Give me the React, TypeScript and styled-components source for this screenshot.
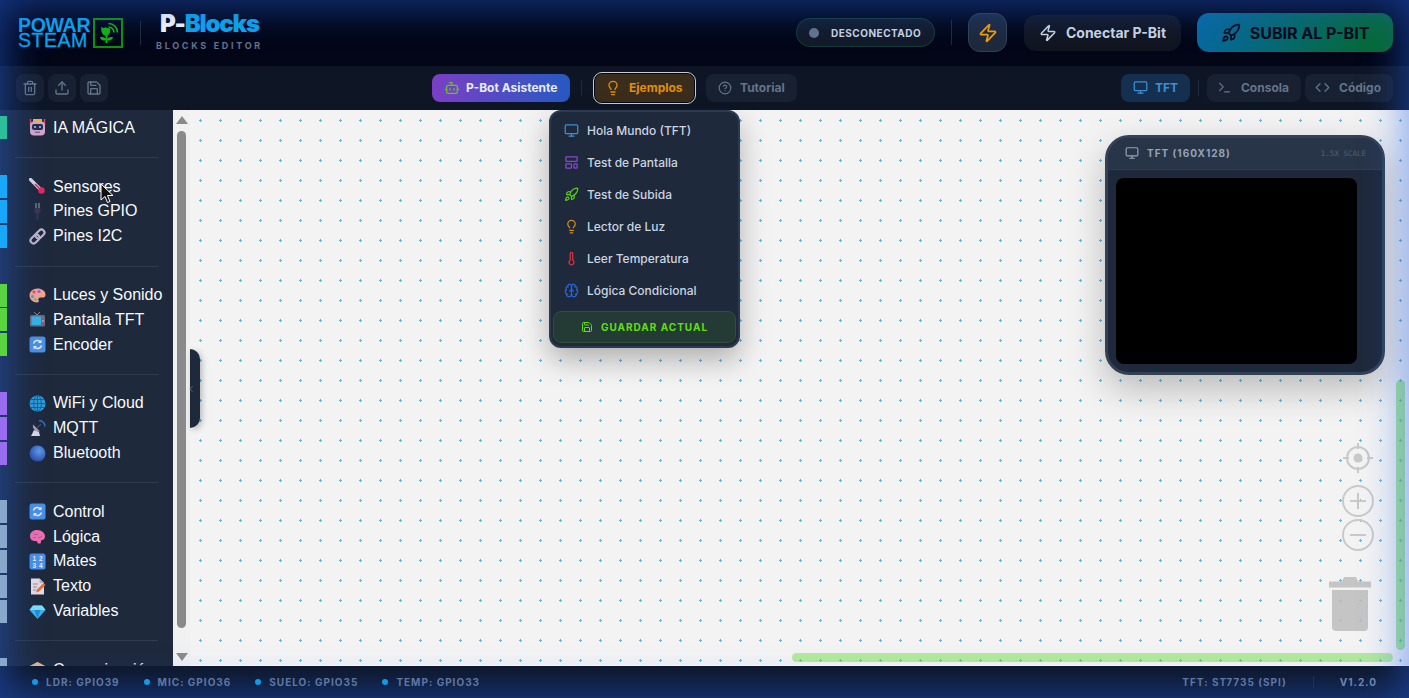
import React from 'react';
import styled, { createGlobalStyle } from 'styled-components';
import {
  Bot,
  Brain,
  ChevronLeft,
  CircleHelp,
  Code,
  Lightbulb,
  LayoutTemplate,
  Monitor,
  Rocket,
  Save,
  Terminal,
  Thermometer,
  Trash2,
  Upload,
  Zap,
} from 'lucide-react';

const GlobalStyle = createGlobalStyle`
  html, body, #root { margin: 0; height: 100%; }
  body { background: #020617; font-family: Inter, "Noto Sans", sans-serif; overflow: hidden; }
  * { box-sizing: border-box; }
`;

// --- toolbox emoji, drawn because the installed fonts have no such glyphs ---
const Emoji = ({ children }: { children: React.ReactNode }) => (
  <svg width="17" height="17" viewBox="0 0 17 17">{children}</svg>
);

const RobotIcon = () => (
  <Emoji>
    <path d="M1.500 0v6M15.500 0v6" stroke="#e0455f" strokeWidth="1.400" />
    <rect x="4" y="0" width="9" height="3" fill="#f0b23e" />
    <rect x="1" y="2.500" width="15" height="14" rx="4" fill="#d2a7c9" />
    <rect x="3" y="5" width="11" height="6" rx="2" fill="#2b2748" />
    <circle cx="6" cy="8" r="1.100" fill="#6fd3f5" />
    <circle cx="11" cy="8" r="1.100" fill="#6fd3f5" />
    <rect x="6" y="12.500" width="5" height="1.500" fill="#7f6a8c" />
  </Emoji>
);
const ThermoIcon = () => (
  <Emoji>
    <path d="M1.500 1.500 12 12" stroke="#d8d5e4" strokeWidth="3.200" strokeLinecap="round" />
    <path d="M6 6 12 12" stroke="#e8265e" strokeWidth="1.600" />
    <circle cx="12.500" cy="12.500" r="3.200" fill="#e8265e" />
  </Emoji>
);
const PlugIcon = () => (
  <Emoji>
    <path d="M7 0v5M10 0v5" stroke="#8d8a99" strokeWidth="1.200" />
    <rect x="5.500" y="5" width="6" height="5" rx="1" fill="#3b3550" />
    <rect x="7.500" y="10" width="2" height="7" fill="#3b3550" />
  </Emoji>
);
const LinkIcon = () => (
  <Emoji>
    <g fill="none" stroke="#bdb6cb" strokeWidth="2.200">
      <rect x="8" y="1" width="6" height="10" rx="3" transform="rotate(45 11 6)" />
      <rect x="3" y="6" width="6" height="10" rx="3" transform="rotate(45 6 11)" />
    </g>
  </Emoji>
);
const PaletteIcon = () => (
  <Emoji>
    <path d="M8.500 1.500C4 1.500.5 4.500.5 8.500s3.500 7 7.500 7c2 0 2-1.500 1.500-2.500s0-2.500 2-2.500h2.500c2 0 2.500-1.500 2.500-3 0-3.500-4-6-8-6z" fill="#f2a58e" />
    <circle cx="5" cy="5" r="1.500" fill="#e0457b" />
    <circle cx="10" cy="4.500" r="1.500" fill="#a45cd6" />
    <circle cx="3.500" cy="9.500" r="1.500" fill="#38a3e8" />
    <circle cx="6.500" cy="12.500" r="1.300" fill="#5cc46a" />
  </Emoji>
);
const TvIcon = () => (
  <Emoji>
    <path d="M5 1l3 3 3-3" stroke="#8b8698" fill="none" />
    <rect x="1" y="4" width="15" height="11.500" rx="1.500" fill="#6f6a7c" />
    <rect x="2.500" y="5.500" width="9.500" height="8.500" rx="1" fill="#35b4e6" />
    <circle cx="14" cy="7" r=".8" fill="#e0457b" />
    <circle cx="14" cy="10" r=".8" fill="#d8d5e4" />
  </Emoji>
);
const RefreshIcon = () => (
  <Emoji>
    <rect x=".5" y=".5" width="16" height="16" rx="2.500" fill="#4a90e6" />
    <path d="M4.500 7.500a4 4 0 0 1 7-1.500M12.500 9.500a4 4 0 0 1-7 1.500" fill="none" stroke="#e8eef8" strokeWidth="1.500" />
    <path d="M12.500 3.500v3.500H9zM4.500 13.500V10H8z" fill="#e8eef8" />
  </Emoji>
);
const GlobeIcon = () => (
  <Emoji>
    <circle cx="8.500" cy="8.500" r="8" fill="#2f9bd6" />
    <g fill="none" stroke="#0f5f92" strokeWidth=".9">
      <ellipse cx="8.500" cy="8.500" rx="3.800" ry="8" />
      <path d="M8.500.5v16M.5 8.500h16M1.800 4.500h13.400M1.800 12.500h13.400" />
    </g>
  </Emoji>
);
const SatelliteIcon = () => (
  <Emoji>
    <path d="M2 16l3-6 5 2 1 4z" fill="#dcd8e6" />
    <path d="M4 4.500a6 6 0 0 0 7 7z" fill="#aaa6b8" />
    <path d="M8 8l4-4" stroke="#4a4660" strokeWidth="1.200" />
    <path d="M10 .5a6 6 0 0 1 6 6" fill="none" stroke="#2f6fd0" strokeWidth="1.500" />
  </Emoji>
);
const BallIcon = () => (
  <Emoji>
    <defs>
      <radialGradient id="ball" cx="0.6" cy="0.35" r="0.75">
        <stop offset="0" stopColor="#5f9df0" />
        <stop offset="1" stopColor="#27439a" />
      </radialGradient>
    </defs>
    <circle cx="8.500" cy="8.500" r="8" fill="url(#ball)" />
  </Emoji>
);
const BrainIcon = () => (
  <Emoji>
    <path d="M1 8c0-3.500 3-6 7-6 5 0 8 3 8 6.500 0 2.500-2 4-3.500 3.500l-1 3.500H9L7.500 13C3.500 13.500 1 11.500 1 8z" fill="#ee6fb2" />
    <path d="M5 5.500c1 1.500 3 1.500 4 .5M9 9.500c1.500.5 3 0 3.500-1.500M4 9.500c1 .5 2 .5 3 0" stroke="#c9468f" fill="none" strokeWidth=".9" />
  </Emoji>
);
const NumbersIcon = () => (
  <Emoji>
    <rect x=".5" y=".5" width="16" height="16" rx="2.500" fill="#4a90e6" />
    <g fill="#e8eef8" fontSize="6.500" fontFamily="Liberation Sans, sans-serif" fontWeight="700" textAnchor="middle">
      <text x="5.200" y="7.500">1</text>
      <text x="11.800" y="7.500">2</text>
      <text x="5.200" y="14.500">3</text>
      <text x="11.800" y="14.500">4</text>
    </g>
  </Emoji>
);
const MemoIcon = () => (
  <Emoji>
    <path d="M2 .5h8.500L15 5v11.500H2z" fill="#e5dfe0" />
    <path d="M10.500.5V5H15z" fill="#b5aeb8" />
    <path d="M4 6h5M4 9h4M4 12h3" stroke="#8f8a96" />
    <path d="M7 14.500l1-3 6.500-6.500 2 2-6.500 6.500z" fill="#ee6a35" />
  </Emoji>
);
const GemIcon = () => (
  <Emoji>
    <path d="M4 2.500h9L16.500 7l-8 9-8-9z" fill="#3fb4ee" />
    <path d="M4 2.500h9L16.500 7H.5z" fill="#7fdcf8" />
    <path d="M5.500 7h6l-3 9z" fill="#1f8fd6" />
  </Emoji>
);
const BoxIcon = () => (
  <Emoji>
    <path d="M8.500 1l7.500 4v8l-7.500 4L1 13V5z" fill="#b98a5c" />
    <path d="M8.500 1l7.500 4-7.500 4L1 5z" fill="#e0b98c" />
  </Emoji>
);

type Category = { name: string; icon: React.ReactNode };
type Group = { color: string; items: Category[] };

const groups: Group[] = [
  { color: '#2bbf9a', items: [{ name: 'IA MÁGICA', icon: <RobotIcon /> }] },
  {
    color: '#18a8fa',
    items: [
      { name: 'Sensores', icon: <ThermoIcon /> },
      { name: 'Pines GPIO', icon: <PlugIcon /> },
      { name: 'Pines I2C', icon: <LinkIcon /> },
    ],
  },
  {
    color: '#5ad53f',
    items: [
      { name: 'Luces y Sonido', icon: <PaletteIcon /> },
      { name: 'Pantalla TFT', icon: <TvIcon /> },
      { name: 'Encoder', icon: <RefreshIcon /> },
    ],
  },
  {
    color: '#9a6cf0',
    items: [
      { name: 'WiFi y Cloud', icon: <GlobeIcon /> },
      { name: 'MQTT', icon: <SatelliteIcon /> },
      { name: 'Bluetooth', icon: <BallIcon /> },
    ],
  },
  {
    color: '#8aa7cc',
    items: [
      { name: 'Control', icon: <RefreshIcon /> },
      { name: 'Lógica', icon: <BrainIcon /> },
      { name: 'Mates', icon: <NumbersIcon /> },
      { name: 'Texto', icon: <MemoIcon /> },
      { name: 'Variables', icon: <GemIcon /> },
    ],
  },
  { color: '#8aa7cc', items: [{ name: 'Comunicación', icon: <BoxIcon /> }] },
];

const examples = [
  { label: 'Hola Mundo (TFT)', color: '#3b8fd6', Icon: Monitor },
  { label: 'Test de Pantalla', color: '#8b45d9', Icon: LayoutTemplate },
  { label: 'Test de Subida', color: '#5bc91a', Icon: Rocket },
  { label: 'Lector de Luz', color: '#d98a0f', Icon: Lightbulb },
  { label: 'Leer Temperatura', color: '#d9363e', Icon: Thermometer },
  { label: 'Lógica Condicional', color: '#2b63d9', Icon: Brain },
];

const pins = ['LDR: GPIO39', 'MIC: GPIO36', 'SUELO: GPIO35', 'TEMP: GPIO33'];

export default function App() {
  return (
    <>
      <GlobalStyle />
      <Shell>
        <Header>
          <Brand>
            <LogoWords>
              <strong>POWAR</strong>
              <span>STEAM</span>
            </LogoWords>
            <LogoBox>
              <svg width="24" height="24" viewBox="0 0 24 24" fill="none" stroke="#12b312" strokeWidth="1.500">
                <path d="M12.500 2.500a9 9 0 0 1 9 9" />
                <path d="M12.500 6a5.500 5.500 0 0 1 5.500 5.500" />
                <path d="M6 7c1.500 1 2.500 1 3.500 0 1 1 2.500 1 4 1 .5 3-1 6-3.500 6S5.500 10.500 6 7z" fill="#12b312" />
                <path d="M10.500 13v9" strokeWidth="2" />
                <path d="M10.500 19c-1-2.500-3-3.500-6.500-3 .5 3 3 4.500 6.500 3zM10.500 19c1-2.500 3-3.500 6.500-3-.5 3-3 4.500-6.500 3z" fill="#12b312" stroke="none" />
              </svg>
            </LogoBox>
            <BrandDivider />
            <TitleBlock>
              <Title>
                P-<em>Blocks</em>
              </Title>
              <Subtitle>BLOCKS EDITOR</Subtitle>
            </TitleBlock>
          </Brand>
          <HeaderActions>
            <StatusPill>
              <StatusDot />
              DESCONECTADO
            </StatusPill>
            <HeaderDivider />
            <ZapButton aria-label="Modo rápido">
              <Zap size={20} color="#f59e0b" />
            </ZapButton>
            <ConnectButton>
              <Zap size={18} />
              Conectar P-Bit
            </ConnectButton>
            <UploadButton>
              <Rocket size={20} />
              SUBIR AL P-BIT
            </UploadButton>
          </HeaderActions>
        </Header>

        <Toolbar>
          <ToolGroup>
            <IconButton aria-label="Borrar"><Trash2 size={16} /></IconButton>
            <IconButton aria-label="Abrir"><Upload size={16} /></IconButton>
            <IconButton aria-label="Guardar"><Save size={16} /></IconButton>
          </ToolGroup>
          <ToolCenter>
            <AssistantButton>
              <Bot size={16} color="#62c41c" />
              P-Bot Asistente
            </AssistantButton>
            <ToolDivider />
            <ExamplesButton>
              <Lightbulb size={16} />
              Ejemplos
            </ExamplesButton>
            <ToolButton>
              <CircleHelp size={14} />
              Tutorial
            </ToolButton>
            <ExamplesMenu>
              {examples.map(({ label, color, Icon }) => (
                <MenuItem key={label}>
                  <Icon size={15} color={color} />
                  {label}
                </MenuItem>
              ))}
              <SaveCurrent>
                <Save size={12} />
                GUARDAR ACTUAL
              </SaveCurrent>
            </ExamplesMenu>
          </ToolCenter>
          <ToolGroup>
            <TftTab>
              <Monitor size={15} />
              TFT
            </TftTab>
            <ToolDivider $gap={4} />
            <ToolTab>
              <Terminal size={15} />
              Consola
            </ToolTab>
            <ToolTab>
              <Code size={15} />
              Código
            </ToolTab>
          </ToolGroup>
        </Toolbar>

        <Main>
          <Toolbox>
            {groups.map((group, i) => (
              <React.Fragment key={i}>
                {i > 0 && <Separator />}
                {group.items.map((item) => (
                  <CategoryRow key={item.name}>
                    <Stripe $color={group.color} />
                    <CategoryIcon>{item.icon}</CategoryIcon>
                    {item.name}
                  </CategoryRow>
                ))}
              </React.Fragment>
            ))}
            <Cursor width="14" height="21" viewBox="0 0 14 21">
              <path d="M1 1v16l4-3.500 2.500 6 2.500-1-2.500-6h5.500z" fill="#111" stroke="#fff" strokeWidth="1" />
            </Cursor>
          </Toolbox>
          <ScrollRail>
            <ArrowUp />
            <RailThumb />
            <ArrowDown />
          </ScrollRail>
          <Workspace>
            <CollapseHandle>
              <ChevronLeft size={10} color="#64748b" />
            </CollapseHandle>
            <TftPanel>
              <TftHeader>
                <TftTitle>
                  <Monitor size={14} />
                  TFT (160X128)
                </TftTitle>
                <TftScale>1.5X SCALE</TftScale>
              </TftHeader>
              <TftBody>
                <TftScreen />
              </TftBody>
            </TftPanel>
            <ZoomControls>
              <svg width="32" height="32" viewBox="0 0 32 32" fill="none" stroke="#c9c9c9" strokeWidth="2">
                <circle cx="16" cy="16" r="11" />
                <circle cx="16" cy="16" r="4.500" fill="#c9c9c9" stroke="none" />
                <path d="M16 1v6M16 25v6M1 16h6M25 16h6" />
              </svg>
              <ZoomButton $top={11} viewBox="0 0 32 32" fill="none" stroke="#c9c9c9" strokeWidth="2">
                <circle cx="16" cy="16" r="15" />
                <path d="M16 8v16M8 16h16" />
              </ZoomButton>
              <ZoomButton $top={2} viewBox="0 0 32 32" fill="none" stroke="#c9c9c9" strokeWidth="2">
                <circle cx="16" cy="16" r="15" />
                <path d="M8 16h16" />
              </ZoomButton>
            </ZoomControls>
            <TrashCan width="42" height="55" viewBox="0 0 42 55" fill="#bdbdbd">
              <path d="M0 5.500h13l2-4.500h12l2 4.500h13v6H0z" />
              <path d="M3 14h36v37a4 4 0 0 1-4 4H7a4 4 0 0 1-4-4z" />
            </TrashCan>
            <VerticalBar />
            <HorizontalBar />
          </Workspace>
        </Main>

        <Footer>
          <FooterGroup>
            {pins.map((pin) => (
              <Pin key={pin}>
                <PinDot />
                {pin}
              </Pin>
            ))}
          </FooterGroup>
          <FooterRight>
            <span>TFT: ST7735 (SPI)</span>
            <FooterDivider />
            <Version>V1.2.0</Version>
          </FooterRight>
        </Footer>
        <Vignette />
      </Shell>
    </>
  );
}

const Shell = styled.div`
  position: relative;
  display: flex;
  flex-direction: column;
  height: 100vh;
  overflow: hidden;
`;

const Vignette = styled.div`
  position: absolute;
  inset: 0;
  pointer-events: none;
  box-shadow: inset 0 0 40px 5px rgba(37, 99, 235, 0.55);
`;

const Header = styled.header`
  flex: none;
  height: 66px;
  display: flex;
  align-items: center;
  justify-content: space-between;
  padding: 0 16px 1px 18px;
  background: #020617;
`;

const Brand = styled.div`
  display: flex;
  align-items: center;
`;

const LogoWords = styled.div`
  display: flex;
  flex-direction: column;
  width: 75px;
  font-family: 'Liberation Sans', Arial, sans-serif;
  font-size: 19.5px;
  line-height: 14.5px;
  color: #0aa5ee;
  strong { font-weight: 700; letter-spacing: -0.3px; }
  span { font-weight: 400; letter-spacing: 0.5px; -webkit-text-stroke: 0.3px #0aa5ee; }
`;

const LogoBox = styled.div`
  width: 30px;
  height: 30px;
  display: flex;
  align-items: center;
  justify-content: center;
  border: 2px solid #0b940b;
`;

const BrandDivider = styled.div`
  width: 1px;
  height: 24px;
  margin: 0 15px 0 17px;
  background: #1e293b;
`;

const TitleBlock = styled.div`
  display: flex;
  flex-direction: column;
  margin-top: -3px;
  gap: 4px;
`;

const Title = styled.div`
  margin-left: 4px;
  font-size: 24px;
  line-height: 24px;
  font-weight: 900;
  letter-spacing: -1.2px;
  color: #f8fafc;
  em { font-style: normal; color: #0ea5e9; }
`;

const Subtitle = styled.div`
  font-size: 9px;
  line-height: 11px;
  font-weight: 700;
  letter-spacing: 2.7px;
  color: #64748b;
`;

const HeaderActions = styled.div`
  display: flex;
  align-items: center;
`;

const StatusPill = styled.div`
  display: flex;
  align-items: center;
  gap: 12px;
  width: 139px;
  height: 29px;
  padding: 0 12px;
  border-radius: 15px;
  border: 1px solid rgba(34, 197, 94, 0.2);
  background: #111a28;
  color: #cbd5e1;
  font-size: 10px;
  font-weight: 700;
  letter-spacing: 0.5px;
`;

const StatusDot = styled.span`
  width: 10px;
  height: 10px;
  border-radius: 50%;
  background: #64748b;
`;

const HeaderDivider = styled.div`
  width: 1px;
  height: 25px;
  margin: 0 16px;
  background: #1e293b;
`;

const ZapButton = styled.button`
  width: 39px;
  height: 39px;
  margin-right: 17px;
  display: flex;
  align-items: center;
  justify-content: center;
  padding: 0;
  border-radius: 12px;
  border: 1px solid #334155;
  background: #1e293b;
`;

const ConnectButton = styled.button`
  width: 157px;
  height: 36px;
  margin-right: 16px;
  display: flex;
  align-items: center;
  justify-content: center;
  gap: 9px;
  border: none;
  border-radius: 12px;
  background: #11151f;
  color: #cbd5e1;
  font-family: inherit;
  font-size: 14px;
  font-weight: 700;
`;

const UploadButton = styled.button`
  width: 196px;
  height: 39px;
  display: flex;
  align-items: center;
  justify-content: center;
  gap: 9px;
  padding: 0;
  border: none;
  border-radius: 12px;
  background: linear-gradient(90deg, #07699f, #056a2a);
  color: #020617;
  font-family: inherit;
  font-size: 16px;
  font-weight: 700;
`;

const Toolbar = styled.div`
  flex: none;
  height: 44px;
  position: relative;
  display: flex;
  align-items: center;
  justify-content: space-between;
  padding: 0 16px;
  background: #0e1626;
`;

const ToolGroup = styled.div`
  display: flex;
  align-items: center;
  gap: 4px;
`;

const ToolCenter = styled.div`
  position: absolute;
  left: 432px;
  top: 0;
  height: 44px;
  display: flex;
  align-items: center;
`;

const IconButton = styled.button`
  width: 28px;
  height: 28px;
  padding: 0;
  display: flex;
  align-items: center;
  justify-content: center;
  border: none;
  border-radius: 8px;
  background: #182132;
  color: #64748b;
`;

const toolText = `
  height: 28px;
  display: flex;
  align-items: center;
  border: none;
  border-radius: 8px;
  font-family: inherit;
  font-size: 12px;
  font-weight: 700;
`;

const AssistantButton = styled.button`
  ${toolText}
  width: 138px;
  gap: 6px;
  padding: 0 0 1px 12px;
  background: linear-gradient(90deg, #7b3fc4, #2759c2);
  color: #e8edf5;
`;

const ToolDivider = styled.div<{ $gap?: number }>`
  width: 1px;
  height: 16px;
  margin: 0 ${(p) => p.$gap ?? 11}px;
  background: #1e293b;
`;

const ExamplesButton = styled.button`
  ${toolText}
  width: 101px;
  height: 30px;
  gap: 8px;
  padding: 0 0 1px 10px;
  margin: 0 11px 0 1px;
  background: #3a2d1c;
  color: #e08e0b;
  border: 1px solid #020617;
  outline: 1.5px solid #c9ccd1;
  border-radius: 8px;
`;

const ToolButton = styled.button`
  ${toolText}
  width: 91px;
  gap: 8px;
  padding: 0 0 1px 12px;
  background: #182132;
  color: #64748b;
`;

const TftTab = styled.button`
  ${toolText}
  width: 69px;
  gap: 7px;
  padding: 0 0 1px 12px;
  background: #15304f;
  color: #3b8fd6;
`;

const ToolTab = styled.button`
  ${toolText}
  gap: 9px;
  padding: 0 12px 1px 10px;
  background: #182132;
  color: #64748b;
`;

const ExamplesMenu = styled.div`
  position: absolute;
  left: 117px;
  top: 44px;
  z-index: 5;
  width: 191px;
  height: 238px;
  padding: 2px 2px;
  display: flex;
  flex-direction: column;
  background: #1e293b;
  border: 2px solid #2c3a4f;
  border-radius: 12px;
  box-shadow: 0 12px 28px rgba(0, 0, 0, 0.28);
`;

const MenuItem = styled.div`
  flex: none;
  height: 32px;
  display: flex;
  align-items: center;
  gap: 8px;
  padding-left: 11px;
  font-size: 12px;
  font-weight: 500;
  color: #cbd5e1;
`;

const SaveCurrent = styled.button`
  margin-top: 5px;
  height: 32px;
  display: flex;
  align-items: center;
  justify-content: center;
  gap: 8px;
  border: 1px solid #2e5036;
  border-radius: 8px;
  background: #233a35;
  color: #5fe00e;
  font-family: inherit;
  font-size: 10px;
  font-weight: 700;
  letter-spacing: 1px;
`;

const Main = styled.div`
  flex: 1;
  min-height: 0;
  display: flex;
`;

const Toolbox = styled.aside`
  position: relative;
  flex: none;
  width: 173px;
  padding-top: 5.500px;
  overflow: hidden;
  background: #1e293b;
  font-family: 'Liberation Sans', Arial, sans-serif;
  font-size: 16px;
  color: #f8fafc;
`;

const CategoryRow = styled.div`
  height: 24.800px;
  display: flex;
  align-items: center;
  white-space: nowrap;
`;

// stays above the vignette, the stripes keep their full colour in the reference
const Stripe = styled.span<{ $color: string }>`
  position: relative;
  z-index: 2;
  flex: none;
  width: 7px;
  height: 23px;
  margin-right: 22px;
  background: ${(p) => p.$color};
`;

const CategoryIcon = styled.span`
  flex: none;
  width: 24px;
  height: 17px;
  display: flex;
`;

const Separator = styled.div`
  height: 1px;
  margin: 17px 15px 16px 15px;
  background: #2f3b4e;
`;

const Cursor = styled.svg`
  position: absolute;
  left: 100px;
  top: 73px;
`;

const ScrollRail = styled.div`
  flex: none;
  width: 17px;
  display: flex;
  flex-direction: column;
  align-items: center;
  padding: 6px 0 5px;
  background: #f1f1f1;
`;

const ArrowUp = styled.span`
  width: 0;
  height: 0;
  border-left: 6px solid transparent;
  border-right: 6px solid transparent;
  border-bottom: 8px solid #8a8a8a;
`;

const ArrowDown = styled.span`
  width: 0;
  height: 0;
  border-left: 6px solid transparent;
  border-right: 6px solid transparent;
  border-top: 8px solid #8a8a8a;
`;

const RailThumb = styled.span`
  width: 9px;
  height: 497px;
  margin: 7px 0 25px;
  border-radius: 5px;
  background: #8a8a8a;
`;

const Workspace = styled.div`
  position: relative;
  flex: 1;
  background-color: #f3f3f3;
  background-image: radial-gradient(circle at 10.5px 10.5px, #45c0f6 1.1px, transparent 1.3px);
  background-size: 20px 20px;
  border-bottom: 1px solid #fff;
`;

const CollapseHandle = styled.div`
  position: absolute;
  left: 0;
  top: 239px;
  width: 10px;
  height: 79px;
  display: flex;
  align-items: center;
  justify-content: flex-start;
  background: #1e293b;
  border-radius: 0 12px 12px 0;
  box-shadow: 2px 2px 6px rgba(0, 0, 0, 0.25);
  svg { margin-left: -4px; }
`;

const TftPanel = styled.div`
  position: absolute;
  left: 915px;
  top: 25px;
  width: 280px;
  height: 240px;
  display: flex;
  flex-direction: column;
  overflow: hidden;
  background: #1e293b;
  border: 3px solid #334155;
  border-radius: 24px;
  box-shadow: 0 14px 36px rgba(0, 0, 0, 0.24);
`;

const TftHeader = styled.div`
  flex: none;
  height: 32px;
  display: flex;
  align-items: center;
  justify-content: space-between;
  padding: 0 16px 1px 17px;
  background: #283548;
  border-bottom: 1px solid #2f3d52;
`;

const TftTitle = styled.div`
  display: flex;
  align-items: center;
  gap: 8px;
  color: #94a3b8;
  font-size: 10px;
  font-weight: 700;
  letter-spacing: 1px;
`;

const TftScale = styled.div`
  color: #4f6076;
  font-family: 'DejaVu Sans Mono', 'Liberation Mono', monospace;
  font-size: 7.500px;
  letter-spacing: 0;
`;

const TftBody = styled.div`
  flex: 1;
  padding: 8px 25px 8px 8px;
`;

const TftScreen = styled.div`
  height: 100%;
  border-radius: 8px;
  background: #000;
`;

const ZoomControls = styled.div`
  position: absolute;
  left: 1152px;
  top: 332px;
  width: 32px;
  display: flex;
  flex-direction: column;
`;

const ZoomButton = styled.svg<{ $top: number }>`
  width: 32px;
  height: 32px;
  margin-top: ${(p) => p.$top}px;
`;

const TrashCan = styled.svg`
  position: absolute;
  left: 1139px;
  top: 466px;
  opacity: 0.85;
`;

const VerticalBar = styled.div`
  position: absolute;
  left: 1206px;
  top: 270px;
  width: 9px;
  height: 270px;
  border-radius: 5px;
  background: rgba(94, 217, 60, 0.5);
`;

const HorizontalBar = styled.div`
  position: absolute;
  left: 602px;
  top: 543px;
  width: 601px;
  height: 9px;
  border-radius: 5px;
  background: rgba(120, 224, 70, 0.5);
`;

const Footer = styled.footer`
  flex: none;
  height: 32px;
  display: flex;
  align-items: center;
  justify-content: space-between;
  padding: 0 32px 0 32px;
  background: #0e1626;
  color: #6b7c96;
  font-size: 10px;
  font-weight: 700;
  letter-spacing: 1px;
`;

const FooterGroup = styled.div`
  display: flex;
  align-items: center;
  gap: 24px;
`;

const Pin = styled.div`
  display: flex;
  align-items: center;
  gap: 8px;
`;

const PinDot = styled.span`
  width: 6px;
  height: 6px;
  border-radius: 50%;
  background: #0ea5e9;
`;

const FooterRight = styled.div`
  display: flex;
  align-items: center;
`;

const FooterDivider = styled.div`
  width: 1px;
  height: 12px;
  margin: 0 26px;
  background: #1e293b;
`;

const Version = styled.span`
  color: #7c8ea8;
`;
